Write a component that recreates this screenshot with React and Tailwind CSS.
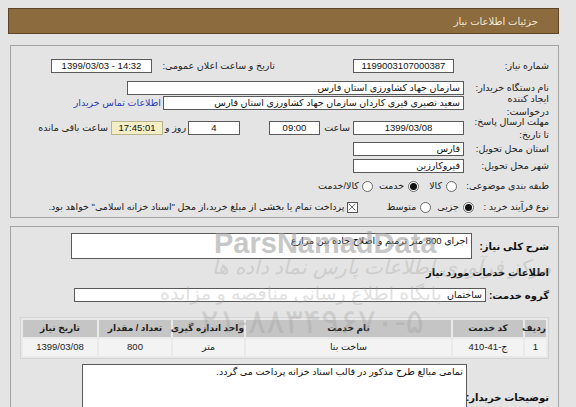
import React from "react";

const Box = ({ w, children, center, ltr, extra = "" }) => (
  <div
    dir={ltr ? "ltr" : undefined}
    className={`h-[14px] shrink-0 border border-[#5a5a5a] bg-white px-[3px] text-[9.5px] leading-[12px] text-[#111] whitespace-nowrap overflow-hidden ${
      center ? "text-center" : "text-right"
    } ${extra}`}
    style={{ width: w }}
  >
    {children}
  </div>
);

const Radio = ({ on }) => (
  <span className="inline-flex h-[11px] w-[11px] shrink-0 items-center justify-center rounded-full border border-[#6a6a6a] bg-white">
    {on && <span className="h-[7px] w-[7px] rounded-full bg-[#111]" />}
  </span>
);

const App = () => {
  return (
    <div
      dir="rtl"
      className="relative h-[407px] w-[576px] overflow-hidden bg-[#e4e4e4] font-[Liberation_Sans,DejaVu_Sans,sans-serif] text-[9.5px] text-[#222]"
    >
      {/* header */}
      <div className="mr-[17px] ml-[8px] mt-[8px] flex h-[26px] items-center border border-[#5e4526] bg-[#8c6b3e] pr-[20px] text-[10px] text-[#f3ead8]">
        جزئیات اطلاعات نیاز
      </div>

      {/* panel 1 */}
      <div className="mr-[17px] ml-[10px] mt-[11px] border border-[#a4a4a4] pr-[9px] pt-[13px] pb-[3px]">
        <div className="flex h-[14px] items-center">
          <div className="w-[95px] shrink-0 whitespace-nowrap">شماره نیاز:</div>
          <Box w={101} center ltr>1199003107000387</Box>
          <div className="mr-[78px] w-[123px] shrink-0 whitespace-nowrap">تاریخ و ساعت اعلان عمومی:</div>
          <Box w={101} center ltr>1399/03/03 - 14:32</Box>
        </div>

        <div className="mt-[8px] flex h-[14px] items-center">
          <div className="w-[85px] shrink-0 whitespace-nowrap">نام دستگاه خریدار:</div>
          <Box w={337}>سازمان جهاد کشاورزی استان فارس</Box>
        </div>

        <div className="mt-[1px] flex h-[14px] items-center">
          <div className="w-[85px] shrink-0 whitespace-nowrap pt-[4px] leading-[13px]">
            ایجاد کننده
            <br />
            درخواست:
          </div>
          <Box w={301}>سعید تصیری قیری کاردان سازمان جهاد کشاورزی استان فارس</Box>
          <div className="mr-[2px] whitespace-nowrap text-[#2a3fb8]">اطلاعات تماس خریدار</div>
        </div>

        <div className="mt-[11px] flex h-[14px] items-center">
          <div className="w-[85px] shrink-0 whitespace-nowrap leading-[13px]">
            مهلت ارسال پاسخ:
            <br />
            تا تاریخ:
          </div>
          <Box w={111} center ltr>1399/03/08</Box>
          <div className="w-[33px] shrink-0 whitespace-nowrap pr-[3px]">ساعت</div>
          <Box w={51} center ltr>09:00</Box>
          <div className="w-[29px] shrink-0" />
          <Box w={52} center ltr>4</Box>
          <div className="w-[25px] shrink-0 whitespace-nowrap pr-[2px]">روز و</div>
          <Box w={52} center ltr extra="!bg-[#f2efc6] !border-[#b9b48a]">
            17:45:01
          </Box>
          <div className="mr-[3px] whitespace-nowrap">ساعت باقی مانده</div>
        </div>

        <div className="mt-[7px] flex h-[14px] items-center">
          <div className="w-[85px] shrink-0 whitespace-nowrap">استان محل تحویل:</div>
          <Box w={111}>فارس</Box>
        </div>

        <div className="mt-[3px] flex h-[14px] items-center">
          <div className="w-[85px] shrink-0 whitespace-nowrap">شهر محل تحویل:</div>
          <Box w={111}>فیروکارزین</Box>
        </div>

        <div className="mt-[6px] flex h-[14px] items-center">
          <div className="w-[92px] shrink-0 whitespace-nowrap">طبقه بندی موضوعی:</div>
          <Radio />
          <span className="mr-[4px]">کالا</span>
          <span className="mr-[10px]" />
          <Radio on />
          <span className="mr-[4px]">خدمت</span>
          <span className="mr-[6px]" />
          <Radio />
          <span className="mr-[3px]">کالا/خدمت</span>
        </div>

        <div className="mt-[7px] flex h-[14px] items-center">
          <div className="w-[75px] shrink-0 whitespace-nowrap">نوع فرآیند خرید :</div>
          <Radio on />
          <span className="mr-[4px]">جزیی</span>
          <span className="mr-[6px]" />
          <Radio />
          <span className="mr-[4px]">متوسط</span>
          <span className="mr-[28px]" />
          <span className="relative h-[11px] w-[11px] shrink-0 border border-[#555] bg-white">
            <svg viewBox="0 0 11 11" className="absolute inset-0 h-full w-full">
              <path d="M1 1L9 9M9 1L1 9" stroke="#444" strokeWidth="1" />
            </svg>
          </span>
          <span className="mr-[3px] whitespace-nowrap">
            پرداخت تمام یا بخشی از مبلغ خرید،از محل "اسناد خزانه اسلامی" خواهد بود.
          </span>
        </div>
      </div>

      {/* panel 2 */}
      <div className="mr-[17px] ml-[10px] mt-[8px] h-[200px] border border-[#a4a4a4] pr-[9px] pt-[6px]">
        <div className="flex items-center">
          <div className="w-[77px] shrink-0 whitespace-nowrap text-[10px] font-bold text-[#111]">شرح کلی نیاز:</div>
          <div className="h-[26px] w-[401px] shrink-0 border border-[#5a5a5a] bg-white px-[3px] text-[9.5px] leading-[14px] text-[#111]">
            اجرای 800 متر ترمیم و اصلاح جاده بین مزارع
          </div>
        </div>

        <div className="mt-[7px] h-[14px] whitespace-nowrap text-[10px] font-bold leading-[14px] text-[#111]">
          اطلاعات خدمات مورد نیاز
        </div>

        <div className="mt-[8px] flex h-[14px] items-center">
          <div className="w-[63px] shrink-0 whitespace-nowrap text-[10px] font-bold text-[#111]">گروه خدمت:</div>
          <Box w={412}>ساختمان</Box>
        </div>

        <div className="mt-[15px] ml-[9px]">
          <table className="w-full table-fixed border-separate border-spacing-[2px] border border-[#d4d4d4] bg-[#e9e9e9] text-center text-[9px]">
            <thead>
              <tr className="h-[17px] bg-[#c5c5c5] text-[#222]">
                <th className="w-[21px] whitespace-nowrap font-bold">ردیف</th>
                <th className="w-[70px] whitespace-nowrap font-bold">کد خدمت</th>
                <th className="whitespace-nowrap font-bold">نام خدمت</th>
                <th className="w-[71px] whitespace-nowrap font-bold">واحد اندازه گیری</th>
                <th className="w-[72px] whitespace-nowrap font-bold">تعداد / مقدار</th>
                <th className="w-[74px] whitespace-nowrap font-bold">تاریخ نیاز</th>
              </tr>
            </thead>
            <tbody>
              <tr className="h-[17px] bg-[#f3f3f3] text-[9.5px] text-[#222]">
                <td>1</td>
                <td>ج-41-410</td>
                <td>ساخت بنا</td>
                <td>متر</td>
                <td>800</td>
                <td>1399/03/08</td>
              </tr>
            </tbody>
          </table>
        </div>

        <div className="mt-[5px] flex items-center">
          <div className="relative z-[1] w-[82px] shrink-0 whitespace-nowrap text-[10px] font-bold text-[#111]">توضیحات خریدار:</div>
          <div className="h-[66px] w-[385px] shrink-0 border border-[#5a5a5a] bg-white px-[3px] text-[9.5px] leading-[14px] text-[#111]">
            تمامی مبالغ طرح مذکور در قالب اسناد خزانه پرداخت می گردد.
          </div>
        </div>
      </div>

      {/* watermark */}
      <div className="pointer-events-none absolute inset-0" dir="ltr">
        <div className="absolute left-[214px] top-[222px] text-[29px] font-bold text-[#9a9a9a] opacity-55 font-[Liberation_Sans,sans-serif]">
          ParsNamadData
        </div>
        <div className="absolute left-[212px] top-[252px] text-[20px] italic text-[#9a9a9a] opacity-30" dir="rtl">
          مرکز فرآوری اطلاعات پارس نماد داده ها
        </div>
        <div className="absolute left-[160px] top-[280px] text-[19px] text-[#9a9a9a] opacity-30" dir="rtl">
          پایگاه اطلاع رسانی مناقصه و مزایده
        </div>
        <div className="absolute left-[182px] top-[296px] text-[34px] text-[#9a9a9a] opacity-30" dir="rtl">
          ۰۲۱-۸۸۳۴۹۶۷۰-۵
        </div>
      </div>
    </div>
  );
};

export default App;
